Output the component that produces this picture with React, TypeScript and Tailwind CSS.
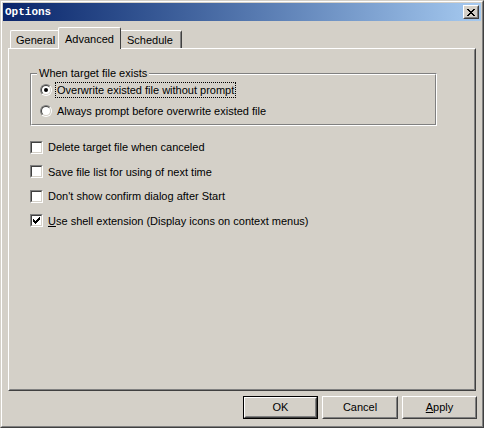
import React from 'react';

const font = { fontFamily: '"Liberation Sans", Arial, sans-serif' };

function Raised({ children, className = '' }: { children?: React.ReactNode; className?: string }) {
  return (
    <div className={`border border-t-white border-l-white border-r-[#404040] border-b-[#404040] ${className}`}>
      <div className="w-full h-full border border-t-transparent border-l-transparent border-r-[#808080] border-b-[#808080] flex items-center justify-center">
        {children}
      </div>
    </div>
  );
}

function Radio({ checked }: { checked?: boolean }) {
  return (
    <div className="w-[12px] h-[12px] rounded-full border border-t-[#808080] border-l-[#808080] border-r-white border-b-white shrink-0">
      <div className="w-full h-full rounded-full border border-t-[#404040] border-l-[#404040] border-r-[#d4d0c8] border-b-[#d4d0c8] bg-white flex items-center justify-center">
        {checked && <div className="w-[4px] h-[4px] rounded-full bg-black" />}
      </div>
    </div>
  );
}

function Check({ checked }: { checked?: boolean }) {
  return (
    <div className="w-[13px] h-[13px] border border-t-[#808080] border-l-[#808080] border-r-white border-b-white shrink-0">
      <div className="w-full h-full border border-t-[#404040] border-l-[#404040] border-r-[#d4d0c8] border-b-[#d4d0c8] bg-white flex items-center justify-center">
        {checked && (
          <svg width="7" height="7" viewBox="0 0 7 7" shapeRendering="crispEdges">
            <path d="M0 2h1v3H0zM1 3h1v3H1zM2 4h1v3H2zM3 3h1v3H3zM4 2h1v3H4zM5 1h1v3H5zM6 0h1v3H6z" fill="#000" />
          </svg>
        )}
      </div>
    </div>
  );
}

const options = [
  { label: 'Delete target file when canceled' },
  { label: 'Save file list for using of next time' },
  { label: "Don't show confirm dialog after Start" },
  { label: 'Use shell extension (Display icons on context menus)', checked: true, underline: true },
];

export default function App() {
  return (
    <div className="w-[484px] h-[428px] bg-[#d4d0c8] text-[11px] text-black" style={font}>
      <div className="w-full h-full border border-t-[#d4d0c8] border-l-[#d4d0c8] border-r-[#404040] border-b-[#404040]">
        <div className="w-full h-full border border-t-white border-l-white border-r-[#808080] border-b-[#808080] p-px flex flex-col">
          {/* Title bar */}
          <div className="h-[18px] flex items-center justify-between pl-[2px] pr-[2px] bg-gradient-to-r from-[#0a246a] to-[#a6caf0]">
            <span className="text-white font-bold text-[11px] leading-none" style={{ fontFamily: '"Liberation Mono", "DejaVu Sans Mono", monospace' }}>
              Options
            </span>
            <Raised className="w-[16px] h-[14px] bg-[#d4d0c8]">
              <svg width="8" height="7" viewBox="0 0 8 7" shapeRendering="crispEdges">
                <path d="M0 0h2v1H0zM6 0h2v1H6zM1 1h2v1H1zM5 1h2v1H5zM2 2h4v1H2zM3 3h2v1H3zM2 4h4v1H2zM1 5h2v1H1zM5 5h2v1H5zM0 6h2v1H0zM6 6h2v1H6z" fill="#000" />
              </svg>
            </Raised>
          </div>

          {/* Tabs */}
          <div className="flex items-end h-[21px] mt-[6px] pl-[5px] relative z-10">
            <div className="h-[18px] w-[50px] ml-[2px] border-t border-l border-white rounded-tl-[2px] flex items-center pl-[5px] pt-px">
              General
            </div>
            <div className="h-[22px] w-[63px] -mb-px bg-[#d4d0c8] border-t border-l border-white border-r border-r-[#404040] rounded-t-[2px] flex items-start pl-[6px] pt-[3px] -ml-[2px]">
              Advanced
            </div>
            <div className="h-[18px] w-[61px] border-t border-white border-r border-r-[#404040] rounded-tr-[2px] flex items-center pl-[6px] pt-px">
              <div className="w-full h-full flex items-center border-r border-[#808080]">Schedule</div>
            </div>
          </div>

          {/* Panel */}
          <div className="mx-[5px] h-[343px] border border-t-white border-l-white border-r-[#404040] border-b-[#404040]">
            <div className="w-full h-full border border-t-transparent border-l-transparent border-r-[#808080] border-b-[#808080] pl-[20px] pt-[23px]">
              {/* Group box */}
              <div className="relative w-[407px] border border-t-[#808080] border-l-[#808080] border-r-white border-b-white">
                <div className="border border-t-white border-l-white border-r-[#808080] border-b-[#808080] pl-[8px] pt-[7px] pb-[5px] flex flex-col gap-[5px]">
                  <div className="flex items-center h-[16px]">
                    <Radio checked />
                    <span className="ml-[3px] px-[1px] h-[16px] flex items-center border border-dotted border-black">
                      Overwrite existed file without prompt
                    </span>
                  </div>
                  <div className="flex items-center h-[16px]">
                    <Radio />
                    <span className="ml-[5px]">Always prompt before overwrite existed file</span>
                  </div>
                </div>
                <span className="absolute left-[6px] -top-[8px] px-[2px] bg-[#d4d0c8] leading-[14px]">When target file exists</span>
              </div>

              {/* Checkboxes */}
              <div className="flex flex-col mt-[9px]">
                {options.map((o) => (
                  <div key={o.label} className="flex items-center h-[24.5px]">
                    <Check checked={o.checked} />
                    <span className="ml-[5px]">
                      {o.underline ? (
                        <>
                          <span className="underline">U</span>
                          {o.label.slice(1)}
                        </>
                      ) : (
                        o.label
                      )}
                    </span>
                  </div>
                ))}
              </div>
            </div>
          </div>

          {/* Buttons */}
          <div className="flex justify-end gap-[4px] mt-[5px] pr-[4px]">
            <div className="border border-black">
              <Raised className="w-[73px] h-[21px]">OK</Raised>
            </div>
            <Raised className="w-[76px] h-[23px]">Cancel</Raised>
            <Raised className="w-[75px] h-[23px]">
              <span>
                <span className="underline">A</span>pply
              </span>
            </Raised>
          </div>
        </div>
      </div>
    </div>
  );
}
